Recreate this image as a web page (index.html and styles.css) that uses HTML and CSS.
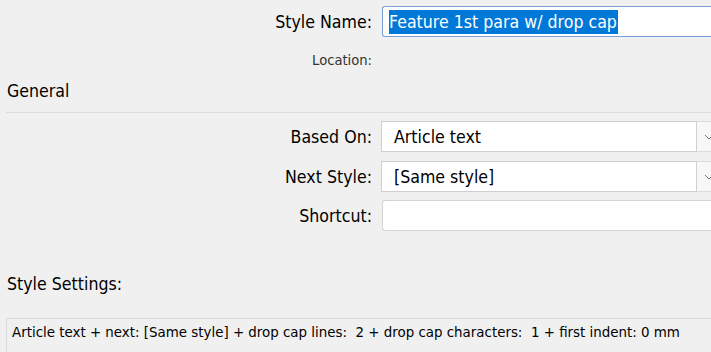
FILE: index.html
```html
<!DOCTYPE html>
<html>
<head>
<meta charset="utf-8">
<link rel="stylesheet" href="styles.css">
</head>
<body>
<div class="dialog">
  <div class="row row-name">
    <div class="label">Style Name:</div>
    <div class="field field-focus"><span class="sel">Feature 1st para w/ drop cap</span></div>
  </div>
  <div class="row row-loc">
    <div class="label small">Location:</div>
    <div class="spacer"></div>
  </div>
  <div class="section">General</div>
  <div class="rule"></div>
  <div class="row row-combo">
    <div class="label">Based On:</div>
    <div class="combo"><div class="combo-text">Article text</div><div class="combo-btn"><svg width="10" height="6" viewBox="0 0 10 6"><path d="M1 1 L5 5 L9 1" fill="none" stroke="#777" stroke-width="1"/></svg></div></div>
  </div>
  <div class="row row-combo2">
    <div class="label">Next Style:</div>
    <div class="combo"><div class="combo-text">[Same style]</div><div class="combo-btn"><svg width="10" height="6" viewBox="0 0 10 6"><path d="M1 1 L5 5 L9 1" fill="none" stroke="#777" stroke-width="1"/></svg></div></div>
  </div>
  <div class="row row-short">
    <div class="label">Shortcut:</div>
    <div class="field field-plain"></div>
  </div>
  <div class="section section-settings">Style Settings:</div>
  <div class="settings">Article text + next: [Same style] + drop cap lines:&nbsp; 2 + drop cap characters:&nbsp; 1 + first indent: 0 mm</div>
</div>
</body>
</html>
```
FILE: styles.css
```css
html, body {
  margin: 0;
  padding: 0;
  background: #f0f0f0;
  overflow: hidden;
}
.dialog {
  font-family: "DejaVu Sans Condensed", "DejaVu Sans", sans-serif;
  font-stretch: condensed;
  font-size: 17.6px;
  color: #000;
  width: 711px;
  height: 352px;
  padding-top: 6px;
  box-sizing: border-box;
}
.row {
  display: flex;
  align-items: center;
  gap: 10px;
}
.label {
  width: 372px;
  text-align: right;
  flex: none;
}
.small {
  font-size: 14.6px;
  color: #333;
}
.field {
  flex: 1;
  height: 31px;
  box-sizing: border-box;
  background: #fff;
  border-radius: 3px 0 0 3px;
  display: flex;
  align-items: center;
  padding-left: 6px;
}
.field-focus {
  border: 1px solid #7aa0d8;
  border-right: none;
}
.sel {
  background: #0078d7;
  color: #fff;
  line-height: 24px;
  padding-right: 1px;
}
.field-plain {
  border: 1px solid #d4d4d4;
  border-right: none;
}
.row-loc {
  height: 18px;
  margin-top: 13px;
}
.section {
  padding-left: 7px;
  margin-top: 13px;
  height: 20px;
  line-height: 20px;
}
.rule {
  height: 1px;
  background: #dcdcdc;
  margin: 11px 0 0 6px;
}
.row-combo {
  margin-top: 8px;
}
.row-combo2 {
  margin-top: 9px;
}
.row-short {
  margin-top: 8px;
}
.combo {
  flex: 1;
  height: 31px;
  box-sizing: border-box;
  display: flex;
  margin-left: -1px;
}
.combo-text {
  flex: 1;
  background: #fff;
  border: 1px solid #cfcfcf;
  display: flex;
  align-items: center;
  padding-left: 12px;
}
.combo-btn {
  width: 14px;
  flex: none;
  background: #f7f7f7;
  border-top: 1px solid #dcdcdc;
  border-bottom: 1px solid #dcdcdc;
  display: flex;
  align-items: center;
  justify-content: flex-end;
}
.combo-btn svg {
  margin-right: -3px;
}
.section-settings {
  margin-top: 43px;
}
.settings {
  margin: 24px 0 0 6px;
  border: 1px solid #d9d9d9;
  border-right: none;
  height: 40px;
  padding: 4px 0 0 5px;
  font-size: 14.9px;
  white-space: nowrap;
}
```
